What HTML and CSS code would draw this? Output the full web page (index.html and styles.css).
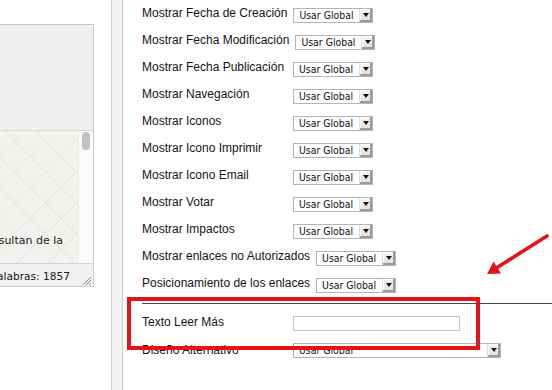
FILE: index.html
```html
<!DOCTYPE html>
<html lang="es">
<head>
<meta charset="utf-8">
<title>Parámetros</title>
<link rel="stylesheet" href="styles.css">
</head>
<body>
<div class="page">
  <div class="left">
    <div class="editor">
      <div class="toolbar"></div>
      <div class="ta">
        <div class="ta-text">y que resultan de la</div>
        <div class="ta-scroll"><div class="thumb"></div></div>
      </div>
      <div class="status">
        <span class="words">Palabras: 1857</span>
        <svg class="grip" width="10" height="10" viewBox="0 0 10 10">
          <path d="M1 9 L9 1 M4 9 L9 4 M7 9 L9 7" stroke="#8a8a8a" stroke-width="1" fill="none"/>
        </svg>
      </div>
    </div>
  </div>
  <div class="strip"></div>
  <div class="main">
    <div class="row"><span class="lbl">Mostrar Fecha de Creación</span><div class="sel"><span class="val">Usar Global</span><span class="btn"><i class="tri"></i></span></div></div>
    <div class="row"><span class="lbl">Mostrar Fecha Modificación</span><div class="sel"><span class="val">Usar Global</span><span class="btn"><i class="tri"></i></span></div></div>
    <div class="row"><span class="lbl">Mostrar Fecha Publicación</span><div class="sel"><span class="val">Usar Global</span><span class="btn"><i class="tri"></i></span></div></div>
    <div class="row"><span class="lbl">Mostrar Navegación</span><div class="sel"><span class="val">Usar Global</span><span class="btn"><i class="tri"></i></span></div></div>
    <div class="row"><span class="lbl">Mostrar Iconos</span><div class="sel"><span class="val">Usar Global</span><span class="btn"><i class="tri"></i></span></div></div>
    <div class="row"><span class="lbl">Mostrar Icono Imprimir</span><div class="sel"><span class="val">Usar Global</span><span class="btn"><i class="tri"></i></span></div></div>
    <div class="row"><span class="lbl">Mostrar Icono Email</span><div class="sel"><span class="val">Usar Global</span><span class="btn"><i class="tri"></i></span></div></div>
    <div class="row"><span class="lbl">Mostrar Votar</span><div class="sel"><span class="val">Usar Global</span><span class="btn"><i class="tri"></i></span></div></div>
    <div class="row"><span class="lbl">Mostrar Impactos</span><div class="sel"><span class="val">Usar Global</span><span class="btn"><i class="tri"></i></span></div></div>
    <div class="row"><span class="lbl">Mostrar enlaces no Autorizados</span><div class="sel"><span class="val">Usar Global</span><span class="btn"><i class="tri"></i></span></div></div>
    <div class="row"><span class="lbl">Posicionamiento de los enlaces</span><div class="sel"><span class="val">Usar Global</span><span class="btn"><i class="tri"></i></span></div></div>
    <div class="sep"></div>
    <div class="row row2"><span class="lbl">Texto Leer Más</span><div class="inp"></div></div>
    <div class="row row2 row3"><span class="lbl">Diseño Alternativo</span><div class="sel wide"><span class="val">Usar Global</span><span class="btn"><i class="tri"></i></span></div></div>
  </div>
  <div class="highlight"></div>
  <svg class="arrow" width="72" height="60" viewBox="0 0 72 60">
    <line x1="67" y1="11" x2="17" y2="42.5" stroke="#e2131a" stroke-width="3.6" stroke-linecap="round"/>
    <polygon points="7,49 21,48.5 13.5,36.5" fill="#e2131a"/>
  </svg>
</div>
</body>
</html>
```

FILE: styles.css
```css
* { box-sizing: border-box; }

html, body {
  margin: 0;
  padding: 0;
  background: #fff;
}

body {
  font-family: "Liberation Sans", Arial, sans-serif;
  color: #1e1e1e;
}

.page {
  position: relative;
  display: flex;
  width: 552px;
  height: 390px;
  overflow: hidden;
}

/* ---------- left editor ---------- */
.left {
  width: 111px;
  flex: none;
  overflow: hidden;
  background: #fff;
}

.editor {
  width: 300px;
  margin-left: -206px;
  margin-top: 24px;
  border: 1px solid #c9c9c9;
  background: #efefef;
}

.toolbar {
  height: 105px;
  background: #efefee;
}

.ta {
  display: flex;
  height: 133px;
  border-top: 1px solid #dadada;
}

.ta-text {
  flex: 1;
  background-color: #f3f2ee;
  background-image:
    repeating-linear-gradient(45deg, rgba(0,0,0,0) 0 21px, rgba(0,0,0,0.035) 21px 22px),
    repeating-linear-gradient(-45deg, rgba(0,0,0,0) 0 21px, rgba(0,0,0,0.035) 21px 22px);
  font-family: "DejaVu Sans", Verdana, sans-serif;
  font-size: 11px;
  line-height: 16px;
  color: #1a1a1a;
  text-align: right;
  white-space: nowrap;
  padding: 102px 15px 0 0;
}

.ta-scroll {
  width: 15px;
  flex: none;
  background: #fafafa;
  border-left: 1px solid #ececec;
}

.thumb {
  width: 8px;
  height: 18px;
  margin: 1px 0 0 3px;
  border-radius: 4px;
  background: #c2c2c2;
}

.status {
  display: flex;
  height: 23px;
  border-top: 1px solid #d4d4d4;
  background: #f1f1f1;
  padding-right: 1px;
}

.words {
  flex: 1;
  text-align: right;
  font-family: "DejaVu Sans", Verdana, sans-serif;
  font-size: 10.6px;
  line-height: 14px;
  padding-top: 5px;
  padding-right: 12px;
  color: #1a1a1a;
  white-space: nowrap;
}

.grip {
  align-self: flex-end;
  flex: none;
}

/* ---------- divider strip ---------- */
.strip {
  width: 12px;
  flex: none;
  background: #f3f3f3;
  border-left: 1px solid #d2d2d2;
  border-right: 1px solid #c8c8c8;
}

/* ---------- main form ---------- */
.main {
  flex: 1;
  padding: 2px 0 0 19px;
}

.row {
  display: flex;
  align-items: flex-start;
  height: 27px;
}

.lbl {
  min-width: 145px;
  margin-right: 6px;
  margin-top: 4px;
  font-size: 12px;
  line-height: 14px;
  white-space: nowrap;
  color: #141414;
}

.sel {
  display: flex;
  width: 80px;
  height: 15px;
  margin-top: 6px;
  border: 1px solid #b4b4b4;
  background: #fff;
}

.sel.wide {
  width: 208px;
}

.val {
  flex: 1;
  padding-left: 5px;
  font-family: "DejaVu Sans Condensed", "DejaVu Sans", sans-serif;
  font-size: 10.4px;
  line-height: 13px;
  color: #111;
  white-space: nowrap;
  overflow: hidden;
}

.btn {
  width: 13px;
  flex: none;
  display: flex;
  align-items: center;
  justify-content: center;
  background: linear-gradient(#f6f6f6, #dedede);
  border-left: 1px solid #e0e0e0;
  box-shadow: inset -2px -2px 0 #9a9a9a, inset 1px 1px 0 #fff;
}

.tri {
  display: block;
  width: 0;
  height: 0;
  margin: -1px 1px 0 0;
  border-left: 3px solid transparent;
  border-right: 3px solid transparent;
  border-top: 4px solid #111;
}

.sep {
  height: 1px;
  margin-top: 4px;
  background: #4a4a4a;
}

.row2 .lbl {
  margin-top: 11px;
}

.inp {
  width: 167px;
  height: 15px;
  margin-top: 12px;
  border: 1px solid #c2c2c2;
  background: #fff;
}

.row3 .sel {
  margin-top: 12px;
}

.row3 .lbl {
  margin-top: 12px;
}

/* ---------- annotations ---------- */
.highlight {
  position: absolute;
  left: 127px;
  top: 297px;
  width: 353px;
  height: 53px;
  border: 4.5px solid #e2131a;
}

.arrow {
  position: absolute;
  left: 480px;
  top: 225px;
}
```
